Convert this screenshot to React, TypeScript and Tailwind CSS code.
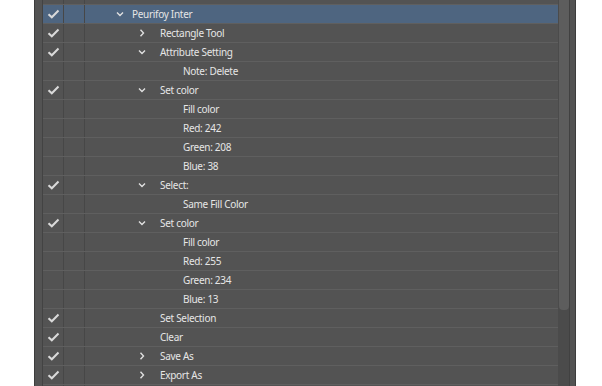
import React from "react";

type Step = {
  label: string;
  level: 1 | 2 | 3;
  checked?: boolean;
  chevron?: "down" | "right";
  selected?: boolean;
};

const steps: Step[] = [
  { label: "Peurifoy Inter", level: 1, checked: true, chevron: "down", selected: true },
  { label: "Rectangle Tool", level: 2, checked: true, chevron: "right" },
  { label: "Attribute Setting", level: 2, checked: true, chevron: "down" },
  { label: "Note: Delete", level: 3 },
  { label: "Set color", level: 2, checked: true, chevron: "down" },
  { label: "Fill color", level: 3 },
  { label: "Red: 242", level: 3 },
  { label: "Green: 208", level: 3 },
  { label: "Blue: 38", level: 3 },
  { label: "Select:", level: 2, checked: true, chevron: "down" },
  { label: "Same Fill Color", level: 3 },
  { label: "Set color", level: 2, checked: true, chevron: "down" },
  { label: "Fill color", level: 3 },
  { label: "Red: 255", level: 3 },
  { label: "Green: 234", level: 3 },
  { label: "Blue: 13", level: 3 },
  { label: "Set Selection", level: 2, checked: true },
  { label: "Clear", level: 2, checked: true },
  { label: "Save As", level: 2, checked: true, chevron: "right" },
  { label: "Export As", level: 2, checked: true, chevron: "right" },
];

const CheckMark = () => (
  <svg width="13" height="10" viewBox="0 0 13 10" fill="none">
    <path d="M1.5 5.2 L4.8 8.3 L11.5 1.5" stroke="#dadada" strokeWidth="2" />
  </svg>
);

const Chevron = ({ dir }: { dir: "down" | "right" }) =>
  dir === "down" ? (
    <svg width="8" height="8" viewBox="0 0 8 8" fill="none">
      <path d="M1 2.5 L4 5.5 L7 2.5" stroke="#e0e0e0" strokeWidth="1.4" />
    </svg>
  ) : (
    <svg width="8" height="8" viewBox="0 0 8 8" fill="none">
      <path d="M2.5 0.8 L5.5 4 L2.5 7.2" stroke="#e0e0e0" strokeWidth="1.4" />
    </svg>
  );

const EmptyRow = () => (
  <div className="flex h-[19px] border-b border-[#5f5f5f]">
    <div className="w-[21px] border-r border-[#474747]" />
    <div className="w-[21px] border-r border-[#474747]" />
    <div className="flex-1" />
  </div>
);

const StepRow = ({ step }: { step: Step }) => {
  const indent =
    step.level === 1 ? "pl-[31px]" : step.level === 2 ? "pl-[53px]" : "pl-[98px]";
  const box = step.level === 1 ? "w-[16px]" : "w-[22px]";

  return (
    <div
      className={`flex h-[19px] border-b border-[#5f5f5f] ${
        step.selected ? "bg-[#4e6580]" : ""
      }`}
    >
      <div className="flex w-[21px] items-center justify-center border-r border-[#474747] pl-[1px]">
        {step.checked && <CheckMark />}
      </div>
      <div className="w-[21px] border-r border-[#474747]" />
      <div className={`flex flex-1 items-center ${indent}`}>
        {step.level !== 3 && (
          <div className={`flex ${box} items-center`}>
            {step.chevron && <Chevron dir={step.chevron} />}
          </div>
        )}
        <span className="text-[10px] leading-none tracking-[-0.3px] text-[#e6e6e6]">
          {step.label}
        </span>
      </div>
    </div>
  );
};

export default function App() {
  return (
    <div
      className="h-[386px] w-[602px] overflow-hidden bg-white"
      style={{ fontFamily: '"Noto Sans", "Open Sans", sans-serif' }}
    >
      <div className="ml-[34px] flex h-full w-[542px] border-x border-[#3d3d3d] bg-[#535353]">
        <div className="w-[7px]" />
        <div className="w-[516px] border-l border-[#434343]">
          <div className="-mt-[14px]">
            <EmptyRow />
            {steps.map((s, i) => (
              <StepRow key={i} step={s} />
            ))}
            <EmptyRow />
          </div>
        </div>
        <div className="flex w-[11px] flex-col bg-[#4b4b4b]">
          <div className="ml-[1px] h-[310px] w-[10px] rounded-b-[4px] bg-[#5d5d5d]" />
        </div>
        <div className="w-[6px] border-l border-[#414141]" />
      </div>
    </div>
  );
}
